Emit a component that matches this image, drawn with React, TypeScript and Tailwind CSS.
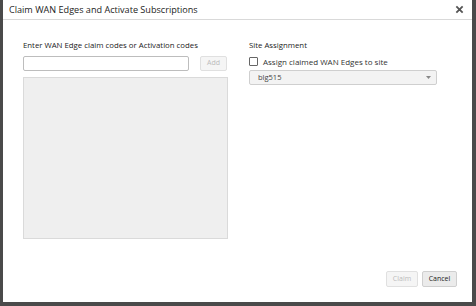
import React from "react";

export default function App() {
  return (
    <div
      className="w-[476px] h-[306px] bg-[#4a4a4a] flex pl-[3px] pr-[4px] pb-[4px] overflow-hidden"
      style={{ fontFamily: '"Open Sans", "Liberation Sans", sans-serif' }}
    >
      <div className="flex-1 bg-white flex flex-col text-[#222]">
        <div className="h-[20px] border-b border-[#d9d9d9] flex items-center justify-between pl-[6px] pr-[8px]">
          <span className="text-[9.1px] leading-none">Claim WAN Edges and Activate Subscriptions</span>
          <svg width="9" height="9" viewBox="0 0 10 10" className="text-[#555]">
            <path d="M1.5 1.5 L8.5 8.5 M8.5 1.5 L1.5 8.5" stroke="currentColor" strokeWidth="2" />
          </svg>
        </div>
        <div className="flex-1 flex pl-[20px] pt-[20px]">
          <div className="w-[204px] flex flex-col">
            <div className="text-[7.8px] leading-[11px] mb-[5px]">Enter WAN Edge claim codes or Activation codes</div>
            <div className="flex gap-[11px] mb-[6px]">
              <div className="w-[166px] h-[15px] border border-[#bdbdbd] rounded-[2px]" />
              <div className="w-[27px] h-[15px] border border-[#e0e0e0] bg-[#f5f5f5] rounded-[2px] text-[7px] text-[#bbb] flex items-center justify-center">Add</div>
            </div>
            <div className="w-[205px] h-[162px] bg-[#efefef] border border-[#dadada]" />
          </div>
          <div className="ml-[22px] flex flex-col">
            <div className="text-[7.8px] leading-[11px] mb-[5px]">Site Assignment</div>
            <div className="flex items-center mb-[3px] h-[11px]">
              <div className="w-[9px] h-[9px] border border-[#666] rounded-[1px] mr-[5px]" />
              <span className="text-[8px] leading-[11px] text-[#333]">Assign claimed WAN Edges to site</span>
            </div>
            <div className="w-[188px] h-[15px] border border-[#cfcfcf] bg-[#f3f3f3] rounded-[2px] flex items-center justify-between pl-[8px] pr-[5px]">
              <span className="text-[7.5px] text-[#444]">blg515</span>
              <svg width="5" height="3" viewBox="0 0 5 3"><path d="M0 0 L5 0 L2.5 3 Z" fill="#888" /></svg>
            </div>
          </div>
        </div>
        <div className="flex justify-end gap-[4px] pr-[15px] pb-[15px]">
          <div className="w-[32px] h-[16px] border border-[#e0e0e0] bg-[#f5f5f5] rounded-[2px] text-[7px] text-[#bbb] flex items-center justify-center">Claim</div>
          <div className="w-[35px] h-[16px] border border-[#cfcfcf] bg-[#ebebeb] rounded-[2px] text-[7px] text-[#222] flex items-center justify-center">Cancel</div>
        </div>
      </div>
    </div>
  );
}
